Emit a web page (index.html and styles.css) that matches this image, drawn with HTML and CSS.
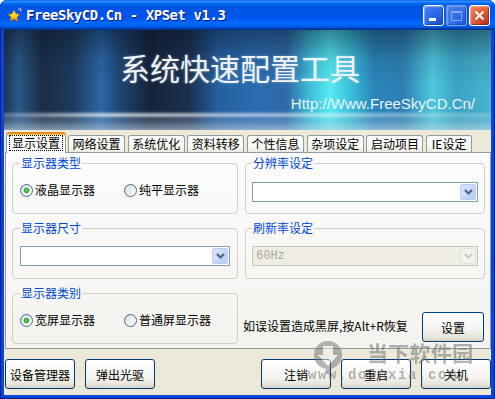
FILE: index.html
```html
<!DOCTYPE html>
<html lang="zh-CN">
<head>
    <meta charset="UTF-8">
    <title>FreeSkyCD.Cn - XPSet v1.3</title>
    <link rel="stylesheet" href="styles.css">
</head>
<body>
<div class="window">
    <div class="titlebar">
        <svg class="app-icon" width="16" height="16" viewBox="0 0 16 16">
            <defs>
                <linearGradient id="star" x1="0" y1="0" x2="0" y2="1">
                    <stop offset="0" stop-color="#fff6a8"/>
                    <stop offset="0.5" stop-color="#ffd21e"/>
                    <stop offset="1" stop-color="#e88a0a"/>
                </linearGradient>
            </defs>
            <polygon points="7,3 8.9,6.8 13,7.3 10,10.1 10.8,14.3 7,12.2 3.2,14.3 4,10.1 1,7.3 5.1,6.8" fill="url(#star)" stroke="#b86a08" stroke-width="0.7"/>
            <path d="M11.5 1.5l.8 1.6M14.6 3.2l-1.6.8M13.8 .8l-.5 1.7" stroke="#ffe9a0" stroke-width="1"/>
        </svg>
        <span class="title">FreeSkyCD.Cn - XPSet v1.3</span>
        <div class="title-buttons">
            <span class="tbtn min"><i></i></span>
            <span class="tbtn max"><i></i></span>
            <span class="tbtn close">
                <svg width="11" height="11" viewBox="0 0 11 11"><path d="M1.5 1.5l8 8M9.5 1.5l-8 8" stroke="#fff" stroke-width="2"/></svg>
            </span>
        </div>
    </div>

    <div class="client">
        <div class="banner">
            <div class="banner-title">系统快速配置工具</div>
            <div class="banner-url">Http://Www.FreeSkyCD.Cn/</div>
        </div>

        <div class="tabs">
            <div class="tab active"><span class="focus">显示设置</span></div>
            <div class="tab">网络设置</div>
            <div class="tab">系统优化</div>
            <div class="tab">资料转移</div>
            <div class="tab">个性信息</div>
            <div class="tab">杂项设定</div>
            <div class="tab">启动项目</div>
            <div class="tab short">IE设定</div>
        </div>

        <div class="panel">
            <fieldset class="group">
                <legend>显示器类型</legend>
                <div class="radios">
                    <label class="option"><input class="radio" type="radio" name="type" checked>液晶显示器</label>
                    <label class="option"><input class="radio" type="radio" name="type">纯平显示器</label>
                </div>
            </fieldset>

            <fieldset class="group wide">
                <legend>分辨率设定</legend>
                <div class="combo first">
                    <span class="combo-value"></span>
                    <span class="combo-btn"><svg width="9" height="6" viewBox="0 0 9 6"><path d="M1 1l3.5 3.5L8 1" fill="none" stroke="#4d6185" stroke-width="2"/></svg></span>
                </div>
            </fieldset>

            <fieldset class="group">
                <legend>显示器尺寸</legend>
                <div class="combo">
                    <span class="combo-value"></span>
                    <span class="combo-btn"><svg width="9" height="6" viewBox="0 0 9 6"><path d="M1 1l3.5 3.5L8 1" fill="none" stroke="#4d6185" stroke-width="2"/></svg></span>
                </div>
            </fieldset>

            <fieldset class="group wide">
                <legend>刷新率设定</legend>
                <div class="combo disabled">
                    <span class="combo-value">60Hz</span>
                    <span class="combo-btn"><svg width="9" height="6" viewBox="0 0 9 6"><path d="M1 1l3.5 3.5L8 1" fill="none" stroke="#c9c7ba" stroke-width="2"/></svg></span>
                </div>
            </fieldset>

            <fieldset class="group">
                <legend>显示器类别</legend>
                <div class="radios">
                    <label class="option"><input class="radio" type="radio" name="kind" checked>宽屏显示器</label>
                    <label class="option"><input class="radio" type="radio" name="kind">普通屏显示器</label>
                </div>
            </fieldset>

            <div class="tip">
                <span class="tip-text">如误设置造成黑屏,按Alt+R恢复</span>
                <button class="btn small">设置</button>
            </div>
        </div>

        <div class="footer">
            <div class="btn-group">
                <button class="btn">设备管理器</button>
                <button class="btn">弹出光驱</button>
            </div>
            <div class="btn-group">
                <button class="btn">注销</button>
                <button class="btn">重启</button>
                <button class="btn">关机</button>
            </div>
        </div>
    </div>

    <div class="watermark">
        <svg class="wm-logo" width="30" height="34" viewBox="0 0 30 34">
            <circle cx="15" cy="15" r="14" fill="#6f6f6f"/>
            <path d="M10 6h10v9h5l-10 11-10-11h5z" fill="#f2f2f2"/>
            <path d="M13 29h4v5h-4z" fill="#6f6f6f"/>
        </svg>
        <span class="wm-name">当下软件园</span>
        <span class="wm-url">www.downxia.com</span>
    </div>
</div>
</body>
</html>
```

FILE: styles.css
```css
* {
    box-sizing: border-box;
}

body {
    margin: 0;
    background: #fff;
    font-family: "Noto Sans CJK SC", "Liberation Sans", sans-serif;
    font-size: 12px;
    color: #000;
}

.window {
    position: relative;
    width: 495px;
    height: 399px;
    display: flex;
    flex-direction: column;
    background: #0a44d8;
    border-radius: 7px 7px 0 0;
    overflow: hidden;
    box-shadow: inset 1px 0 #00208c, inset -1px 0 #00208c, inset 0 -1px #00208c;
}

/* title bar */
.titlebar {
    height: 30px;
    flex: none;
    display: flex;
    align-items: center;
    padding: 0 5px 0 7px;
    background: linear-gradient(to bottom, #0058ee 0%, #3593ff 4%, #288eff 6%, #127dff 8%, #036ffc 10%, #0262ee 14%, #0057e5 20%, #0054e3 24%, #0055eb 56%, #005bf5 66%, #026afe 76%, #0062ef 86%, #0052d6 92%, #0040ab 94%, #003092 100%);
}

.app-icon {
    margin-right: 3px;
}

.title {
    font-family: "DejaVu Sans Mono", "Liberation Mono", monospace;
    font-weight: bold;
    font-size: 14px;
    letter-spacing: -0.45px;
    color: #fff;
    text-shadow: 1px 1px #0a1880;
    white-space: pre;
}

.title-buttons {
    margin-left: auto;
    display: flex;
    gap: 2px;
    margin-top: 1px;
}

.tbtn {
    position: relative;
    width: 21px;
    height: 21px;
    border: 1px solid #fff;
    border-radius: 3px;
    display: flex;
    align-items: center;
    justify-content: center;
    background: radial-gradient(circle at 80% 85%, #1c55d8 0%, #2a66e8 40%, #4a86f5 100%);
    box-shadow: inset -1px -1px 1px rgba(0, 30, 120, 0.5), inset 1px 1px 1px rgba(255, 255, 255, 0.35);
}

.tbtn.min i {
    position: absolute;
    left: 5px;
    bottom: 4px;
    width: 7px;
    height: 3px;
    background: #fff;
}

.tbtn.max {
    border-color: rgba(255, 255, 255, 0.45);
    background: radial-gradient(circle at 80% 85%, #3060d8 0%, #4a7ae6 50%, #6a96ee 100%);
    opacity: 0.75;
}

.tbtn.max i {
    width: 11px;
    height: 10px;
    border: 1px solid rgba(255, 255, 255, 0.55);
    border-top-width: 2px;
}

.tbtn.close {
    background: radial-gradient(circle at 80% 85%, #c3391a 0%, #e05a34 45%, #f08a66 100%);
}

/* client area */
.client {
    flex: 1;
    display: flex;
    flex-direction: column;
    margin: 0 4px 4px;
    background: #ece9d8;
}

.banner {
    position: relative;
    height: 100px;
    flex: none;
    padding: 22px 16px 0 116px;
    background:
        linear-gradient(180deg, rgba(8, 18, 36, 0.45) 0%, rgba(8, 18, 36, 0.1) 30%, rgba(0, 0, 0, 0) 55%, rgba(0, 0, 0, 0) 80%, rgba(180, 200, 220, 0.3) 92%, rgba(205, 220, 232, 0.6) 100%),
        linear-gradient(90deg, #1c3555 0%, #2a5888 3%, #1a2d48 8%, #1e3a5c 14%, #2a68a8 20%, #1f4470 24%, #15233a 30%, #1b3050 38%, #2560a0 44%, #2b6cb0 52%, #2f6aa8 58%, #3fc0dc 63%, #55eaf0 67%, #3cc0dc 71%, #2a85b8 76%, #2f80b4 82%, #4ec8dc 88%, #3aa2c4 93%, #4ab4cc 100%);
}

.banner::after {
    content: "";
    position: absolute;
    left: 0;
    right: 0;
    top: 83px;
    height: 4px;
    background: linear-gradient(90deg, rgba(255, 255, 255, 0.2), rgba(255, 255, 255, 0.65) 20%, rgba(255, 255, 255, 0.45) 65%, rgba(255, 255, 255, 0.15));
    filter: blur(1px);
}

.banner-title {
    font-size: 30px;
    line-height: 30px;
    color: #eef4fa;
    text-shadow: 0 0 3px rgba(255, 255, 255, 0.35);
}

.banner-url {
    position: relative;
    z-index: 1;
    margin-top: 14px;
    text-align: right;
    font-family: "Liberation Sans", sans-serif;
    font-size: 15px;
    line-height: 16px;
    color: #e8f4ff;
}

/* tabs */
.tabs {
    height: 22px;
    flex: none;
    display: flex;
    align-items: flex-end;
    padding-left: 2px;
}

.tab {
    width: 57px;
    height: 17px;
    margin-left: 2.7px;
    border: 1px solid #919b9c;
    border-bottom: none;
    border-radius: 3px 3px 0 0;
    background: linear-gradient(#fffffe, #f7f7f3 70%, #e9e8e0);
    text-align: center;
    line-height: 16px;
}

.tab.short {
    width: 46px;
}

.tab.active {
    position: relative;
    z-index: 1;
    width: 60px;
    height: 21px;
    margin-left: 0;
    margin-right: -0.7px;
    margin-bottom: -1px;
    border-top: 2px solid #e68b2c;
    box-shadow: inset 0 1px #ffc73c;
    background: #fcfcfe;
    padding-top: 2px;
    line-height: 14px;
}

.tab .focus {
    display: inline-block;
    padding: 0 2px;
    outline: 1px dotted #000;
    outline-offset: 0;
}

/* tab page */
.panel {
    height: 197px;
    flex: none;
    margin-left: 1px;
    border: 1px solid #919b9c;
    background: linear-gradient(#fcfcfe, #f4f3ee);
    display: grid;
    grid-template-columns: 226px 240px;
    grid-auto-rows: 58px;
    column-gap: 7px;
    row-gap: 7px;
    align-content: start;
    padding: 3px 0 0 6px;
}

.group {
    margin: 0;
    min-width: 0;
    height: 58px;
    padding: 0 7px;
    border: 1px solid #d0d0bf;
    border-radius: 4px;
}

.group.wide {
    padding: 0 6px;
}

.group legend {
    padding: 0 1px;
    color: #0046d5;
    line-height: 14px;
}

.radios {
    display: flex;
    margin-top: 13px;
}

.option {
    width: 104px;
    display: flex;
    align-items: center;
    gap: 2px;
    line-height: 14px;
    white-space: nowrap;
}

.radio {
    appearance: none;
    width: 13px;
    height: 13px;
    margin: 0;
    border: 1px solid #3b6a95;
    border-radius: 50%;
    background: linear-gradient(135deg, #dcdcd4, #ffffff);
}

.radio:checked {
    background:
        radial-gradient(circle, #6ee36e 0, #2aa62a 2.2px, rgba(255, 255, 255, 0) 3.2px),
        linear-gradient(135deg, #dcdcd4, #ffffff);
}

.combo {
    height: 20px;
    margin-top: 11px;
    border: 1px solid #7f9db9;
    background: #fff;
    display: flex;
    align-items: center;
    padding: 1px;
}

.combo.first {
    margin-top: 12px;
}

.combo-value {
    flex: 1;
    padding-left: 2px;
    font-family: "Liberation Mono", monospace;
    font-size: 12px;
}

.combo-btn {
    width: 16px;
    height: 16px;
    display: flex;
    align-items: center;
    justify-content: center;
    border: 1px solid #b9ccf6;
    border-radius: 2px;
    background: linear-gradient(135deg, #dbe6fd, #b7cbf7);
}

.combo.disabled {
    border-color: #c9c7ba;
    background: #efede3;
}

.combo.disabled .combo-value {
    color: #aca899;
}

.combo.disabled .combo-btn {
    border-color: #e2e0d6;
    background: #f3f2ec;
}

.tip {
    display: flex;
    align-items: flex-end;
    justify-content: space-between;
    padding-bottom: 2px;
    margin-left: -2px;
    margin-right: 1px;
}

.tip-text {
    margin-bottom: 9px;
    line-height: 14px;
    white-space: nowrap;
}

/* buttons */
.btn {
    width: 70px;
    height: 30px;
    padding: 0;
    border: 1px solid #003c74;
    border-radius: 3px;
    background: linear-gradient(#ffffff, #f4f4f0 60%, #e6e3d8 88%, #d6d0c5);
    font-family: "Noto Sans CJK SC", sans-serif;
    font-size: 12px;
    color: #000;
}

.btn.small {
    width: 62px;
}

.footer {
    display: flex;
    justify-content: space-between;
    padding: 10px 0 0 1px;
}

.btn-group {
    display: flex;
    gap: 10px;
}

/* watermark laid over the screenshot */
.watermark {
    position: absolute;
    left: 308px;
    top: 340px;
    display: grid;
    grid-template-columns: 59px auto;
    grid-template-rows: 28px auto;
    opacity: 0.5;
    pointer-events: none;
    color: #6a6a6a;
}

.wm-logo {
    grid-row: 1 / 3;
    grid-column: 1;
    margin-left: 5px;
}

.wm-name {
    grid-row: 1;
    grid-column: 2;
    margin-top: 1px;
    font-size: 21px;
    line-height: 22px;
    font-weight: bold;
    letter-spacing: 0.3px;
}

.wm-url {
    grid-row: 2;
    grid-column: 1 / 3;
    font-family: "Liberation Mono", monospace;
    font-weight: bold;
    font-size: 14px;
    line-height: 14px;
    letter-spacing: 1.6px;
}
```
